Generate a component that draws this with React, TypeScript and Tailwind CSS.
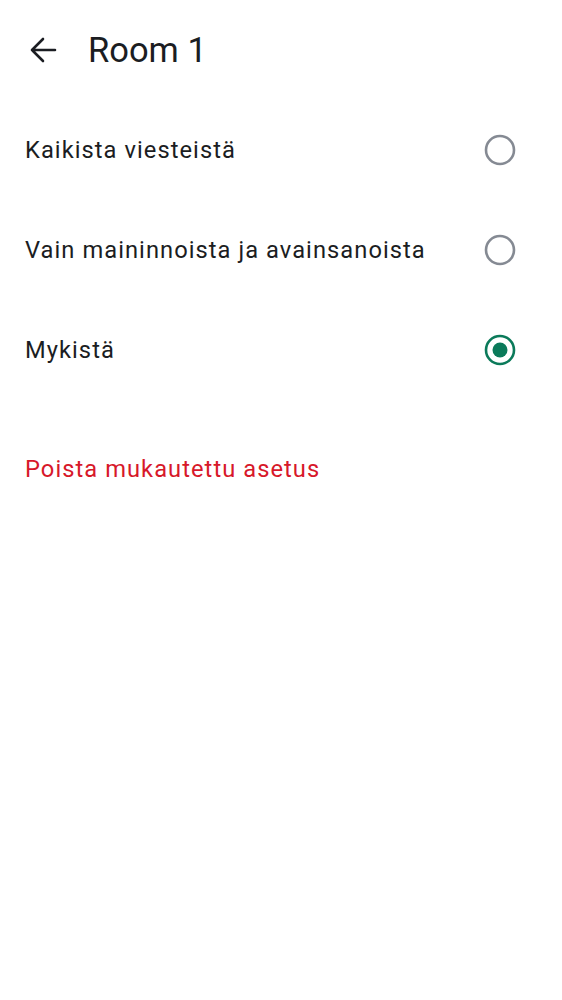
import React from "react";

function Radio({ checked }: { checked: boolean }) {
  return (
    <svg width="32" height="32" viewBox="0 0 32 32" className="shrink-0">
      <circle
        cx="16"
        cy="16"
        r="14"
        fill="none"
        stroke={checked ? "#0b7a5a" : "#858a93"}
        strokeWidth="2.6"
      />
      {checked && <circle cx="16" cy="16" r="7.5" fill="#0b7a5a" />}
    </svg>
  );
}

export default function App() {
  const options = [
    { label: "Kaikista viesteistä", checked: false },
    { label: "Vain maininnoista ja avainsanoista", checked: false },
    { label: "Mykistä", checked: true },
  ];
  return (
    <div
      className="w-[562px] h-[1000px] bg-white text-[#1b1d22]"
      style={{ fontFamily: "Roboto, 'Noto Sans', sans-serif" }}
    >
      <div className="h-[100px] flex items-center pl-[28px]">
        <svg width="30" height="30" viewBox="0 0 30 30" className="shrink-0">
          <path
            d="M4 15 H27 M15 4 L4 15 L15 26"
            fill="none"
            stroke="#1b1d22"
            strokeWidth="2.6"
            strokeLinecap="round"
            strokeLinejoin="round"
          />
        </svg>
        <span className="ml-[30px] text-[34.5px] leading-none">Room 1</span>
      </div>
      <div className="flex flex-col">
        {options.map((o) => (
          <div
            key={o.label}
            className="h-[100px] flex items-center justify-between pl-[25px] pr-[46px]"
          >
            <span className="text-[23.7px] tracking-[1.05px] pt-[1px]">{o.label}</span>
            <Radio checked={o.checked} />
          </div>
        ))}
      </div>
      <div className="pl-[25px] pt-[52px] text-[23.7px] tracking-[1.05px] text-[#d7182a]">
        Poista mukautettu asetus
      </div>
    </div>
  );
}
